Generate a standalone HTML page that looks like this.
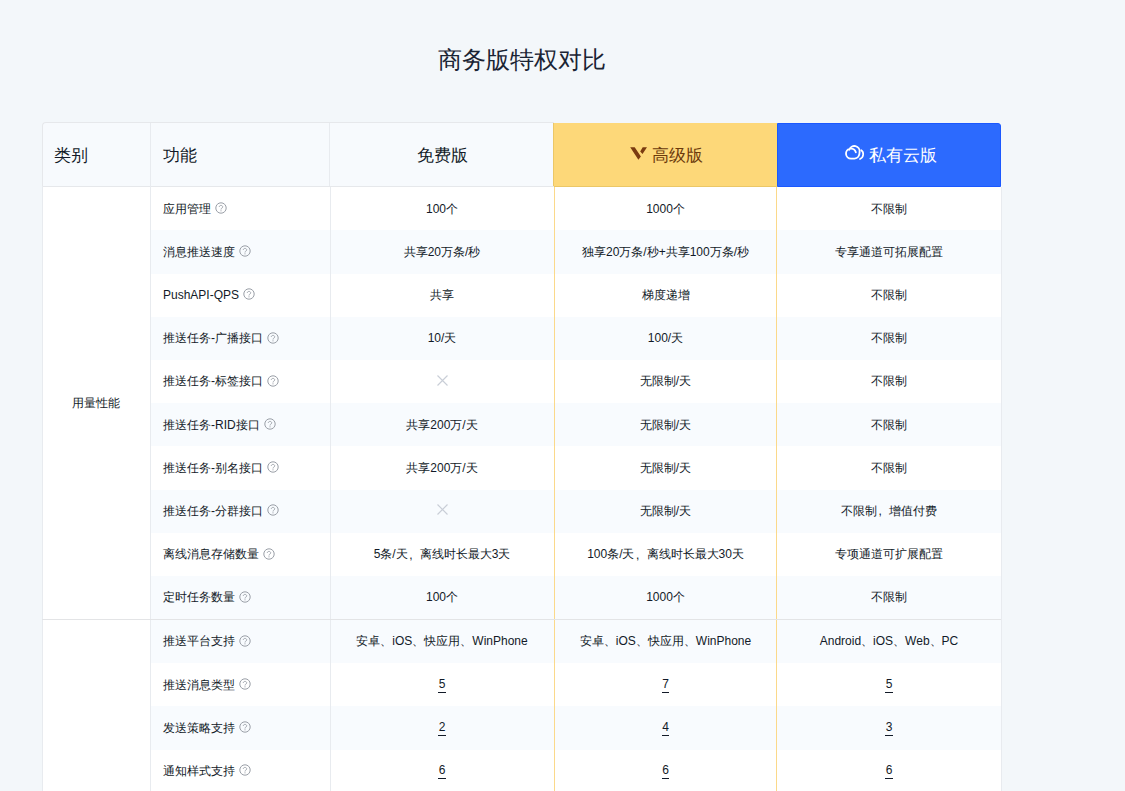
<!DOCTYPE html>
<html><head><meta charset="utf-8">
<style>
html,body{margin:0;padding:0;}
body{width:1125px;height:791px;overflow:hidden;background:#f3f7fa;font-family:"Liberation Sans",sans-serif;color:#121a28;position:relative;}
.title{position:absolute;left:0;width:1043px;top:45px;text-align:center;font-size:24px;line-height:30px;color:#1a2434;}
.hd{position:absolute;top:122px;height:64px;display:flex;align-items:center;font-size:16.5px;box-sizing:border-box;padding-top:3px;}
.bodybg{position:absolute;left:42px;top:186px;width:960px;height:620px;background:#fff;}
.stripe{position:absolute;left:151px;width:850px;background:#f8fbfe;}
.fn{position:absolute;left:163px;width:166px;display:flex;align-items:center;font-size:12px;white-space:nowrap;box-sizing:border-box;padding-top:0.55px;}
.fn .q{margin-left:4px;position:relative;top:-1.1px;}
.vc{position:absolute;display:flex;align-items:center;justify-content:center;font-size:12px;white-space:nowrap;box-sizing:border-box;padding-top:0.55px;}
.u{border-bottom:1px solid #121a28;padding:0 0.5px 1px;line-height:14px;position:relative;top:-0.5px}
.vl{position:absolute;width:1px;}
.hl{position:absolute;height:1px;}
.cm{display:inline-block;width:12px;text-indent:1.5px;}
.cat{position:absolute;left:42px;width:108px;top:187px;height:432px;display:flex;align-items:center;justify-content:center;font-size:12px;}
</style></head><body>
<div class="title">商务版特权对比</div>
<div class="bodybg"></div>
<div class="hd" style="left:42px;width:512px;background:#f7fafd;border-top-left-radius:4px;border:1px solid #e6e8eb;border-right:none;border-bottom:none"></div>
<div class="hd" style="left:42px;width:108px;padding-left:12px;">类别</div>
<div class="hd" style="left:150px;width:180px;padding-left:13px;">功能</div>
<div class="hd" style="left:330px;width:224px;justify-content:center;">免费版</div>
<div class="hd" style="left:553px;top:123px;height:64px;width:224px;justify-content:center;background:#fdd879;border-left:1px solid #ebc767;border-bottom:1px solid #ebc767;border-right:1px solid #fddc6c;color:#6c3a0c;padding-top:2px;">
<span style="padding-left:24px">高级版</span></div>
<svg style="position:absolute;left:626px;top:143px" width="26" height="20" viewBox="0 0 26 20"><path d="M4.2 4.2H8.7L14.9 13.4L12.4 16.8Z M16.7 4.2H21L16.5 10.9L14.2 8.4Z" fill="#7a3b10"/></svg>
<div class="hd" style="left:777px;top:123px;height:64px;width:224px;justify-content:center;background:#2c6afe;border:1px solid #1b58fe;color:#fff;border-top-right-radius:3px;padding-top:2px;">
<span style="padding-left:27px">私有云版</span></div>
<svg style="position:absolute;left:840px;top:140px" width="26" height="24" viewBox="0 0 26 24"><path d="M15.83 12.3A5 5 0 1 0 11 18.6L14.5 18.6C17.5 18.6 19.6 16 19.6 12A5.3 5.3 0 0 0 9.3 9.7" fill="none" stroke="#fff" stroke-width="1.85" stroke-linecap="round"/><path d="M21.3 10.2C23.9 11.8 24.2 17.2 20.0 19.0" fill="none" stroke="#fff" stroke-width="1.7" stroke-linecap="round"/></svg>
<div class="hl" style="left:42px;width:512px;top:186px;background:#e6e8eb"></div>
<div class="fn" style="top:187.20px;height:43.20px">应用管理<svg class="q" width="12" height="12" viewBox="0 0 12 12"><circle cx="6" cy="6" r="5.2" fill="none" stroke="#9a9fa7" stroke-width="1"/><path d="M4.3 5.0C4.3 3.9 5.1 3.4 6 3.4C6.9 3.4 7.7 4.0 7.7 4.9C7.7 5.7 7.0 6.0 6.5 6.4C6.1 6.7 6.0 7.0 6.0 7.5" fill="none" stroke="#9a9fa7" stroke-width="0.9"/><circle cx="6" cy="8.8" r=".6" fill="#9a9fa7"/></svg></div>
<div class="vc" style="left:330px;width:224px;top:187.20px;height:43.20px">100个</div>
<div class="vc" style="left:554px;width:223px;top:187.20px;height:43.20px">1000个</div>
<div class="vc" style="left:777px;width:224px;top:187.20px;height:43.20px">不限制</div>
<div class="stripe" style="top:230.40px;height:43.20px"></div>
<div class="fn" style="top:230.40px;height:43.20px">消息推送速度<svg class="q" width="12" height="12" viewBox="0 0 12 12"><circle cx="6" cy="6" r="5.2" fill="none" stroke="#9a9fa7" stroke-width="1"/><path d="M4.3 5.0C4.3 3.9 5.1 3.4 6 3.4C6.9 3.4 7.7 4.0 7.7 4.9C7.7 5.7 7.0 6.0 6.5 6.4C6.1 6.7 6.0 7.0 6.0 7.5" fill="none" stroke="#9a9fa7" stroke-width="0.9"/><circle cx="6" cy="8.8" r=".6" fill="#9a9fa7"/></svg></div>
<div class="vc" style="left:330px;width:224px;top:230.40px;height:43.20px">共享20万条/秒</div>
<div class="vc" style="left:554px;width:223px;top:230.40px;height:43.20px">独享20万条/秒+共享100万条/秒</div>
<div class="vc" style="left:777px;width:224px;top:230.40px;height:43.20px">专享通道可拓展配置</div>
<div class="fn" style="top:273.60px;height:43.20px">PushAPI-QPS<svg class="q" width="12" height="12" viewBox="0 0 12 12"><circle cx="6" cy="6" r="5.2" fill="none" stroke="#9a9fa7" stroke-width="1"/><path d="M4.3 5.0C4.3 3.9 5.1 3.4 6 3.4C6.9 3.4 7.7 4.0 7.7 4.9C7.7 5.7 7.0 6.0 6.5 6.4C6.1 6.7 6.0 7.0 6.0 7.5" fill="none" stroke="#9a9fa7" stroke-width="0.9"/><circle cx="6" cy="8.8" r=".6" fill="#9a9fa7"/></svg></div>
<div class="vc" style="left:330px;width:224px;top:273.60px;height:43.20px">共享</div>
<div class="vc" style="left:554px;width:223px;top:273.60px;height:43.20px">梯度递增</div>
<div class="vc" style="left:777px;width:224px;top:273.60px;height:43.20px">不限制</div>
<div class="stripe" style="top:316.80px;height:43.20px"></div>
<div class="fn" style="top:316.80px;height:43.20px">推送任务-广播接口<svg class="q" width="12" height="12" viewBox="0 0 12 12"><circle cx="6" cy="6" r="5.2" fill="none" stroke="#9a9fa7" stroke-width="1"/><path d="M4.3 5.0C4.3 3.9 5.1 3.4 6 3.4C6.9 3.4 7.7 4.0 7.7 4.9C7.7 5.7 7.0 6.0 6.5 6.4C6.1 6.7 6.0 7.0 6.0 7.5" fill="none" stroke="#9a9fa7" stroke-width="0.9"/><circle cx="6" cy="8.8" r=".6" fill="#9a9fa7"/></svg></div>
<div class="vc" style="left:330px;width:224px;top:316.80px;height:43.20px">10/天</div>
<div class="vc" style="left:554px;width:223px;top:316.80px;height:43.20px">100/天</div>
<div class="vc" style="left:777px;width:224px;top:316.80px;height:43.20px">不限制</div>
<div class="fn" style="top:360.00px;height:43.20px">推送任务-标签接口<svg class="q" width="12" height="12" viewBox="0 0 12 12"><circle cx="6" cy="6" r="5.2" fill="none" stroke="#9a9fa7" stroke-width="1"/><path d="M4.3 5.0C4.3 3.9 5.1 3.4 6 3.4C6.9 3.4 7.7 4.0 7.7 4.9C7.7 5.7 7.0 6.0 6.5 6.4C6.1 6.7 6.0 7.0 6.0 7.5" fill="none" stroke="#9a9fa7" stroke-width="0.9"/><circle cx="6" cy="8.8" r=".6" fill="#9a9fa7"/></svg></div>
<div class="vc" style="left:330px;width:224px;top:360.00px;height:43.20px"><svg width="11" height="11" viewBox="0 0 11 11" style="position:relative;top:-1.6px;left:0.5px"><path d="M0.5 0.5L10.5 10.5M10.5 0.5L0.5 10.5" stroke="#c9ced7" stroke-width="1.15"/></svg></div>
<div class="vc" style="left:554px;width:223px;top:360.00px;height:43.20px">无限制/天</div>
<div class="vc" style="left:777px;width:224px;top:360.00px;height:43.20px">不限制</div>
<div class="stripe" style="top:403.20px;height:43.20px"></div>
<div class="fn" style="top:403.20px;height:43.20px">推送任务-RID接口<svg class="q" width="12" height="12" viewBox="0 0 12 12"><circle cx="6" cy="6" r="5.2" fill="none" stroke="#9a9fa7" stroke-width="1"/><path d="M4.3 5.0C4.3 3.9 5.1 3.4 6 3.4C6.9 3.4 7.7 4.0 7.7 4.9C7.7 5.7 7.0 6.0 6.5 6.4C6.1 6.7 6.0 7.0 6.0 7.5" fill="none" stroke="#9a9fa7" stroke-width="0.9"/><circle cx="6" cy="8.8" r=".6" fill="#9a9fa7"/></svg></div>
<div class="vc" style="left:330px;width:224px;top:403.20px;height:43.20px">共享200万/天</div>
<div class="vc" style="left:554px;width:223px;top:403.20px;height:43.20px">无限制/天</div>
<div class="vc" style="left:777px;width:224px;top:403.20px;height:43.20px">不限制</div>
<div class="fn" style="top:446.40px;height:43.20px">推送任务-别名接口<svg class="q" width="12" height="12" viewBox="0 0 12 12"><circle cx="6" cy="6" r="5.2" fill="none" stroke="#9a9fa7" stroke-width="1"/><path d="M4.3 5.0C4.3 3.9 5.1 3.4 6 3.4C6.9 3.4 7.7 4.0 7.7 4.9C7.7 5.7 7.0 6.0 6.5 6.4C6.1 6.7 6.0 7.0 6.0 7.5" fill="none" stroke="#9a9fa7" stroke-width="0.9"/><circle cx="6" cy="8.8" r=".6" fill="#9a9fa7"/></svg></div>
<div class="vc" style="left:330px;width:224px;top:446.40px;height:43.20px">共享200万/天</div>
<div class="vc" style="left:554px;width:223px;top:446.40px;height:43.20px">无限制/天</div>
<div class="vc" style="left:777px;width:224px;top:446.40px;height:43.20px">不限制</div>
<div class="stripe" style="top:489.60px;height:43.20px"></div>
<div class="fn" style="top:489.60px;height:43.20px">推送任务-分群接口<svg class="q" width="12" height="12" viewBox="0 0 12 12"><circle cx="6" cy="6" r="5.2" fill="none" stroke="#9a9fa7" stroke-width="1"/><path d="M4.3 5.0C4.3 3.9 5.1 3.4 6 3.4C6.9 3.4 7.7 4.0 7.7 4.9C7.7 5.7 7.0 6.0 6.5 6.4C6.1 6.7 6.0 7.0 6.0 7.5" fill="none" stroke="#9a9fa7" stroke-width="0.9"/><circle cx="6" cy="8.8" r=".6" fill="#9a9fa7"/></svg></div>
<div class="vc" style="left:330px;width:224px;top:489.60px;height:43.20px"><svg width="11" height="11" viewBox="0 0 11 11" style="position:relative;top:-1.6px;left:0.5px"><path d="M0.5 0.5L10.5 10.5M10.5 0.5L0.5 10.5" stroke="#c9ced7" stroke-width="1.15"/></svg></div>
<div class="vc" style="left:554px;width:223px;top:489.60px;height:43.20px">无限制/天</div>
<div class="vc" style="left:777px;width:224px;top:489.60px;height:43.20px">不限制<span class="cm">,</span>增值付费</div>
<div class="fn" style="top:532.80px;height:43.20px">离线消息存储数量<svg class="q" width="12" height="12" viewBox="0 0 12 12"><circle cx="6" cy="6" r="5.2" fill="none" stroke="#9a9fa7" stroke-width="1"/><path d="M4.3 5.0C4.3 3.9 5.1 3.4 6 3.4C6.9 3.4 7.7 4.0 7.7 4.9C7.7 5.7 7.0 6.0 6.5 6.4C6.1 6.7 6.0 7.0 6.0 7.5" fill="none" stroke="#9a9fa7" stroke-width="0.9"/><circle cx="6" cy="8.8" r=".6" fill="#9a9fa7"/></svg></div>
<div class="vc" style="left:330px;width:224px;top:532.80px;height:43.20px">5条/天<span class="cm">,</span>离线时长最大3天</div>
<div class="vc" style="left:554px;width:223px;top:532.80px;height:43.20px">100条/天<span class="cm">,</span>离线时长最大30天</div>
<div class="vc" style="left:777px;width:224px;top:532.80px;height:43.20px">专项通道可扩展配置</div>
<div class="stripe" style="top:576.00px;height:43.20px"></div>
<div class="fn" style="top:576.00px;height:43.20px">定时任务数量<svg class="q" width="12" height="12" viewBox="0 0 12 12"><circle cx="6" cy="6" r="5.2" fill="none" stroke="#9a9fa7" stroke-width="1"/><path d="M4.3 5.0C4.3 3.9 5.1 3.4 6 3.4C6.9 3.4 7.7 4.0 7.7 4.9C7.7 5.7 7.0 6.0 6.5 6.4C6.1 6.7 6.0 7.0 6.0 7.5" fill="none" stroke="#9a9fa7" stroke-width="0.9"/><circle cx="6" cy="8.8" r=".6" fill="#9a9fa7"/></svg></div>
<div class="vc" style="left:330px;width:224px;top:576.00px;height:43.20px">100个</div>
<div class="vc" style="left:554px;width:223px;top:576.00px;height:43.20px">1000个</div>
<div class="vc" style="left:777px;width:224px;top:576.00px;height:43.20px">不限制</div>
<div class="stripe" style="top:620.00px;height:43.20px"></div>
<div class="fn" style="top:620.00px;height:43.20px">推送平台支持<svg class="q" width="12" height="12" viewBox="0 0 12 12"><circle cx="6" cy="6" r="5.2" fill="none" stroke="#9a9fa7" stroke-width="1"/><path d="M4.3 5.0C4.3 3.9 5.1 3.4 6 3.4C6.9 3.4 7.7 4.0 7.7 4.9C7.7 5.7 7.0 6.0 6.5 6.4C6.1 6.7 6.0 7.0 6.0 7.5" fill="none" stroke="#9a9fa7" stroke-width="0.9"/><circle cx="6" cy="8.8" r=".6" fill="#9a9fa7"/></svg></div>
<div class="vc" style="left:330px;width:224px;top:620.00px;height:43.20px">安卓、iOS、快应用、WinPhone</div>
<div class="vc" style="left:554px;width:223px;top:620.00px;height:43.20px">安卓、iOS、快应用、WinPhone</div>
<div class="vc" style="left:777px;width:224px;top:620.00px;height:43.20px">Android、iOS、Web、PC</div>
<div class="fn" style="top:663.20px;height:43.20px">推送消息类型<svg class="q" width="12" height="12" viewBox="0 0 12 12"><circle cx="6" cy="6" r="5.2" fill="none" stroke="#9a9fa7" stroke-width="1"/><path d="M4.3 5.0C4.3 3.9 5.1 3.4 6 3.4C6.9 3.4 7.7 4.0 7.7 4.9C7.7 5.7 7.0 6.0 6.5 6.4C6.1 6.7 6.0 7.0 6.0 7.5" fill="none" stroke="#9a9fa7" stroke-width="0.9"/><circle cx="6" cy="8.8" r=".6" fill="#9a9fa7"/></svg></div>
<div class="vc" style="left:330px;width:224px;top:663.20px;height:43.20px"><span class="u">5</span></div>
<div class="vc" style="left:554px;width:223px;top:663.20px;height:43.20px"><span class="u">7</span></div>
<div class="vc" style="left:777px;width:224px;top:663.20px;height:43.20px"><span class="u">5</span></div>
<div class="stripe" style="top:706.40px;height:43.20px"></div>
<div class="fn" style="top:706.40px;height:43.20px">发送策略支持<svg class="q" width="12" height="12" viewBox="0 0 12 12"><circle cx="6" cy="6" r="5.2" fill="none" stroke="#9a9fa7" stroke-width="1"/><path d="M4.3 5.0C4.3 3.9 5.1 3.4 6 3.4C6.9 3.4 7.7 4.0 7.7 4.9C7.7 5.7 7.0 6.0 6.5 6.4C6.1 6.7 6.0 7.0 6.0 7.5" fill="none" stroke="#9a9fa7" stroke-width="0.9"/><circle cx="6" cy="8.8" r=".6" fill="#9a9fa7"/></svg></div>
<div class="vc" style="left:330px;width:224px;top:706.40px;height:43.20px"><span class="u">2</span></div>
<div class="vc" style="left:554px;width:223px;top:706.40px;height:43.20px"><span class="u">4</span></div>
<div class="vc" style="left:777px;width:224px;top:706.40px;height:43.20px"><span class="u">3</span></div>
<div class="fn" style="top:749.60px;height:43.20px">通知样式支持<svg class="q" width="12" height="12" viewBox="0 0 12 12"><circle cx="6" cy="6" r="5.2" fill="none" stroke="#9a9fa7" stroke-width="1"/><path d="M4.3 5.0C4.3 3.9 5.1 3.4 6 3.4C6.9 3.4 7.7 4.0 7.7 4.9C7.7 5.7 7.0 6.0 6.5 6.4C6.1 6.7 6.0 7.0 6.0 7.5" fill="none" stroke="#9a9fa7" stroke-width="0.9"/><circle cx="6" cy="8.8" r=".6" fill="#9a9fa7"/></svg></div>
<div class="vc" style="left:330px;width:224px;top:749.60px;height:43.20px"><span class="u">6</span></div>
<div class="vc" style="left:554px;width:223px;top:749.60px;height:43.20px"><span class="u">6</span></div>
<div class="vc" style="left:777px;width:224px;top:749.60px;height:43.20px"><span class="u">6</span></div>
<div class="cat" style="top:187.2px;height:432px">用量性能</div>
<div class="vl" style="left:42px;top:186px;height:620px;background:#e8ebef"></div>
<div class="vl" style="left:150px;top:123px;height:683px;background:#e8ebef"></div>
<div class="vl" style="left:329px;top:123px;height:63px;background:#e8ebef"></div>
<div class="vl" style="left:330px;top:187px;height:620px;background:#e8ebef"></div>
<div class="vl" style="left:554px;top:187px;height:620px;background:#fbd98a"></div>
<div class="vl" style="left:776px;top:187px;height:620px;background:#fbd98a"></div>
<div class="vl" style="left:1001px;top:187px;height:620px;background:#e8ebef"></div>
<div class="hl" style="left:42px;width:959px;top:619.2px;height:0.8px;background:#e3e4e6"></div>
</body></html>
